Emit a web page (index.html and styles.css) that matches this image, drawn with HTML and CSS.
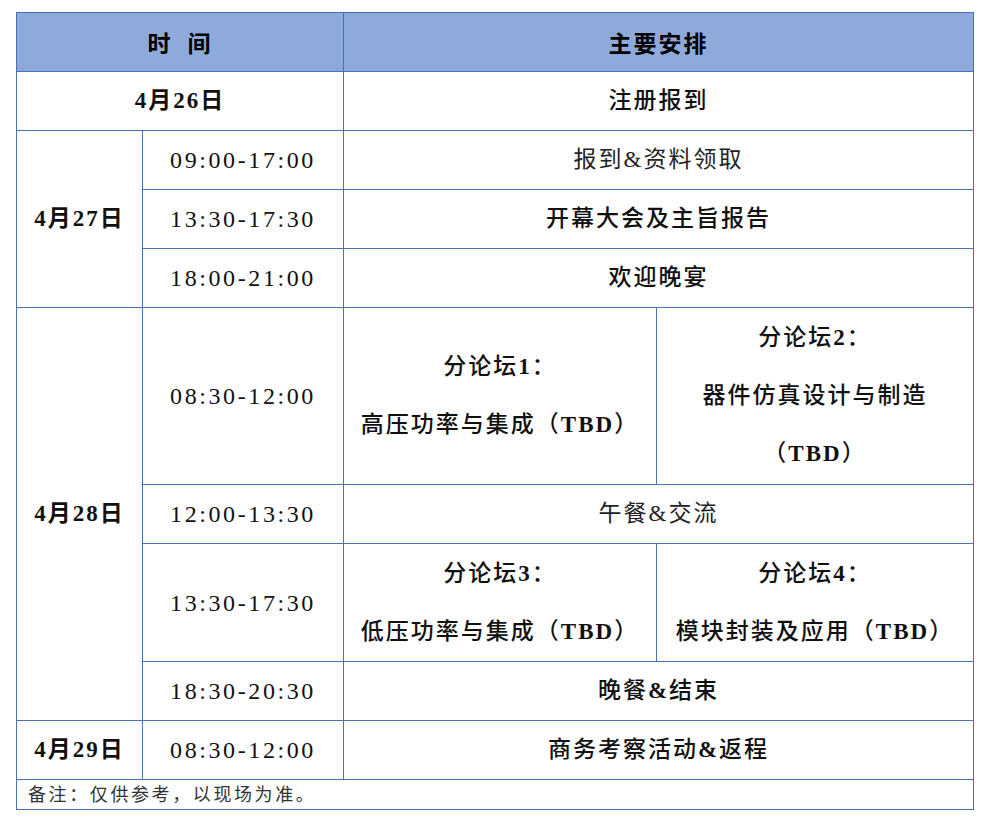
FILE: index.html
```html
<!DOCTYPE html>
<html lang="zh-CN">
<head>
<meta charset="utf-8">
<title>日程安排</title>
<link rel="stylesheet" href="styles.css">
</head>
<body>
<table class="schedule">
  <colgroup>
    <col class="c-date">
    <col class="c-time">
    <col class="c-a">
    <col class="c-b">
  </colgroup>
  <thead>
    <tr class="row">
      <th colspan="2" class="head"><span class="gap">时</span>间</th>
      <th colspan="2" class="head">主要安排</th>
    </tr>
  </thead>
  <tbody>
    <tr class="row">
      <td colspan="2" class="date">4月26日</td>
      <td colspan="2" class="bold">注册报到</td>
    </tr>
    <tr class="row">
      <td rowspan="3" class="date">4月27日</td>
      <td class="time">09:00-17:00</td>
      <td colspan="2" class="plain">报到&amp;资料领取</td>
    </tr>
    <tr class="row">
      <td class="time">13:30-17:30</td>
      <td colspan="2" class="bold">开幕大会及主旨报告</td>
    </tr>
    <tr class="row">
      <td class="time">18:00-21:00</td>
      <td colspan="2" class="bold">欢迎晚宴</td>
    </tr>
    <tr class="row tall3">
      <td rowspan="4" class="date">4月28日</td>
      <td class="time">08:30-12:00</td>
      <td class="bold multi">分论坛<span class="lat">1</span>：<br>高压功率与集成（<span class="lat">TBD</span>）</td>
      <td class="bold multi">分论坛<span class="lat">2</span>：<br>器件仿真设计与制造<br>（<span class="lat">TBD</span>）</td>
    </tr>
    <tr class="row">
      <td class="time">12:00-13:30</td>
      <td colspan="2" class="plain">午餐&amp;交流</td>
    </tr>
    <tr class="row tall2">
      <td class="time">13:30-17:30</td>
      <td class="bold multi">分论坛<span class="lat">3</span>：<br>低压功率与集成（<span class="lat">TBD</span>）</td>
      <td class="bold multi">分论坛<span class="lat">4</span>：<br>模块封装及应用（<span class="lat">TBD</span>）</td>
    </tr>
    <tr class="row">
      <td class="time">18:30-20:30</td>
      <td colspan="2" class="bold">晚餐<span class="lat">&amp;</span>结束</td>
    </tr>
    <tr class="row">
      <td class="date">4月29日</td>
      <td class="time">08:30-12:00</td>
      <td colspan="2" class="bold">商务考察活动<span class="lat">&amp;</span>返程</td>
    </tr>
    <tr class="note-row">
      <td colspan="4" class="note">备注：仅供参考，以现场为准。</td>
    </tr>
  </tbody>
</table>
</body>
</html>
```
FILE: styles.css
```css
html, body {
  margin: 0;
  padding: 0;
  background: #ffffff;
}

body {
  padding: 12px 0 0 16px;
  font-family: "Liberation Serif", "Noto Sans CJK SC", serif;
  color: #111111;
}

.schedule {
  border-collapse: collapse;
  table-layout: fixed;
  width: 957px;
}

.c-date { width: 126px; }
.c-time { width: 201px; }
.c-a { width: 313px; }
.c-b { width: 317px; }

.schedule th,
.schedule td {
  border: 1px solid #4a70b8;
  padding: 0;
  text-align: center;
  vertical-align: middle;
  font-size: 23px;
  letter-spacing: 2px;
  line-height: 58px;
}

.row { height: 59px; }
.tall3 { height: 177px; }
.tall2 { height: 118px; }

.head {
  background: #8eaadb;
  font-family: "Noto Sans CJK SC", "Liberation Sans", sans-serif;
  font-weight: 700;
  font-size: 23px;
  color: #000000;
}

.gap { margin-right: 15px; }

.date {
  font-weight: 700;
  font-size: 23px;
  letter-spacing: 1px;
}

.schedule .time {
  font-weight: 400;
  font-size: 24px;
  letter-spacing: 2.6px;
}

.bold {
  font-weight: 500;
}

.lat {
  font-weight: 700;
}

.plain {
  font-weight: 400;
  color: #222222;
}

.multi {
  line-height: 58px;
}

.note-row { height: 30px; }

.schedule .note {
  text-align: left;
  padding-left: 11px;
  font-size: 18px;
  line-height: 28px;
  letter-spacing: 2.6px;
  color: #333333;
  font-weight: 400;
}
```
